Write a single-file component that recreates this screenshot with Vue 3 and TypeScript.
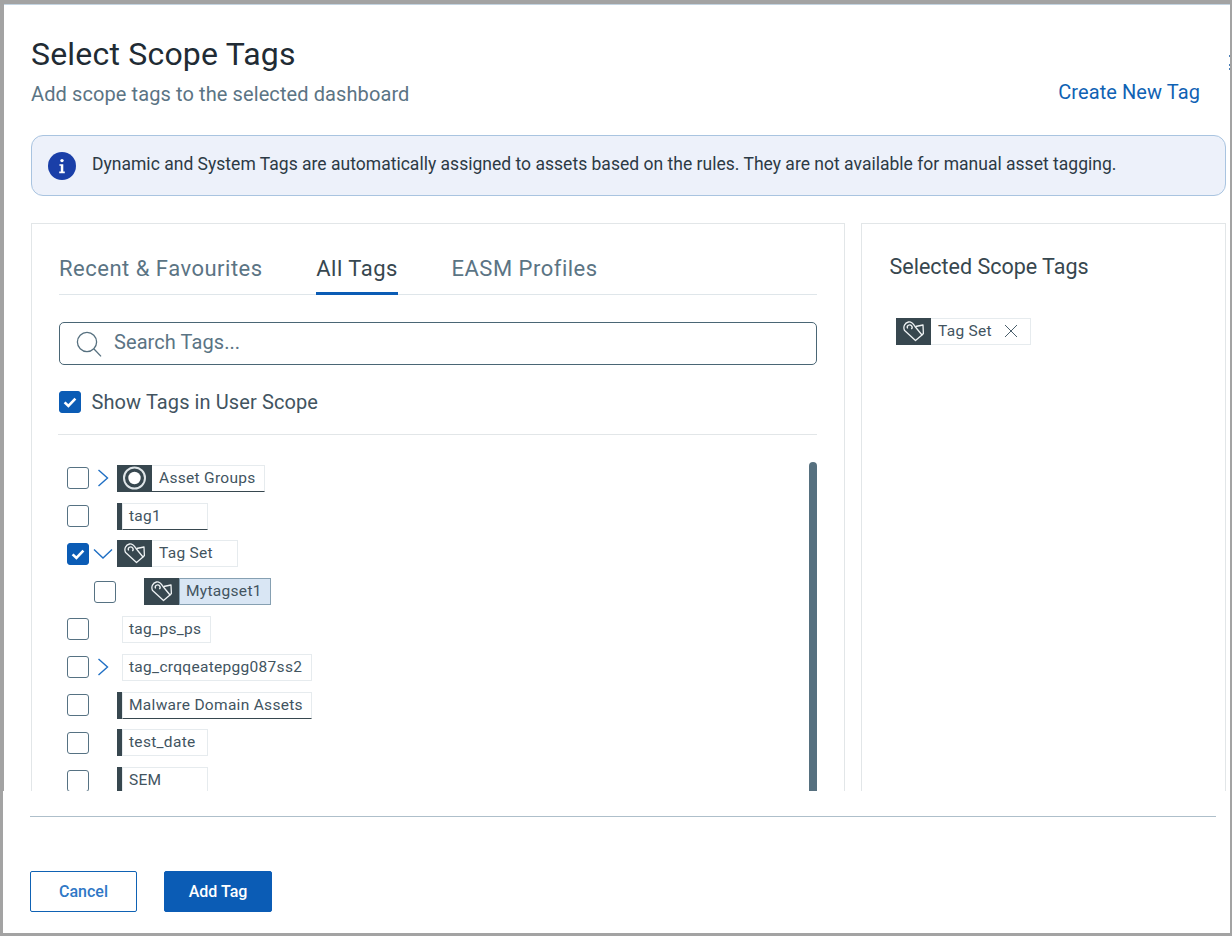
<script setup lang="ts">
type TagKind = 'plain' | 'bar' | 'icon'

interface TreeRow {
  label: string
  kind: TagKind
  glyph?: 'target' | 'tags'
  chevron?: 'right' | 'down'
  checked?: boolean
  child?: boolean
  strong?: boolean
  active?: boolean
}

const rows: TreeRow[] = [
  { label: 'Asset Groups', kind: 'icon', glyph: 'target', chevron: 'right', strong: true },
  { label: 'tag1', kind: 'bar', strong: true },
  { label: 'Tag Set', kind: 'icon', glyph: 'tags', chevron: 'down', checked: true },
  { label: 'Mytagset1', kind: 'icon', glyph: 'tags', child: true, active: true },
  { label: 'tag_ps_ps', kind: 'plain' },
  { label: 'tag_crqqeatepgg087ss2', kind: 'plain', chevron: 'right' },
  { label: 'Malware Domain Assets', kind: 'bar', strong: true },
  { label: 'test_date', kind: 'bar' },
  { label: 'SEM', kind: 'bar' },
]

const tabs = ['Recent & Favourites', 'All Tags', 'EASM Profiles']
</script>

<template>
  <div class="page">
    <div class="dialog">
      <header class="head">
        <div>
          <h1 class="title">Select Scope Tags</h1>
          <p class="subtitle">Add scope tags to the selected dashboard</p>
        </div>
        <a class="create">Create New Tag</a>
      </header>

      <div class="notice">
        <svg class="notice__icon" viewBox="0 0 28 28" width="28" height="28">
          <circle cx="14" cy="14" r="14" fill="#1a3fa8" />
          <circle cx="14" cy="8.6" r="1.7" fill="#fff" />
          <path d="M11.4 12.2h3.9v7.4h1.5v1.6h-5.6v-1.6h1.6v-5.8h-1.4z" fill="#fff" />
        </svg>
        <span class="notice__text">Dynamic and System Tags are automatically assigned to assets based on the rules. They are not available for manual asset tagging.</span>
      </div>

      <div class="columns">
        <section class="panel panel--left">
          <nav class="tabs">
            <span v-for="(tab, i) in tabs" :key="tab" class="tab" :class="{ 'tab--on': i === 1 }">{{ tab }}</span>
          </nav>

          <div class="search">
            <svg viewBox="0 0 26 26" width="26" height="26" fill="none" stroke="#56707f" stroke-width="1.3">
              <circle cx="11" cy="11" r="9.6" />
              <path d="M18 18l7 7.4" />
            </svg>
            <span>Search Tags...</span>
          </div>

          <label class="scope">
            <span class="check check--on">
              <svg viewBox="0 0 22 22" width="22" height="22" fill="none" stroke="#fff" stroke-width="2.6">
                <path d="M5.6 11.4l3.8 3.6 7-7.4" />
              </svg>
            </span>
            Show Tags in User Scope
          </label>

          <div class="tree">
            <div v-for="row in rows" :key="row.label" class="row" :class="{ 'row--child': row.child }">
              <span class="check" :class="{ 'check--on': row.checked }">
                <svg v-if="row.checked" viewBox="0 0 22 22" width="22" height="22" fill="none" stroke="#fff" stroke-width="2.6">
                  <path d="M5.6 11.4l3.8 3.6 7-7.4" />
                </svg>
              </span>
              <span class="chevron">
                <svg v-if="row.chevron === 'right'" viewBox="0 0 12 18" width="12" height="18" fill="none" stroke="#1f6fc4" stroke-width="1.4">
                  <path d="M1.5 1l9 8-9 8" />
                </svg>
                <svg v-else-if="row.chevron === 'down'" viewBox="0 0 20 12" width="20" height="12" fill="none" stroke="#1f6fc4" stroke-width="1.4">
                  <path d="M1 1.6l9 8.4 9-8.4" />
                </svg>
              </span>
              <span class="tag" :class="[`tag--${row.kind}`, { 'tag--strong': row.strong, 'tag--active': row.active }]">
                <span v-if="row.kind === 'icon'" class="tag__icon">
                  <svg v-if="row.glyph === 'target'" viewBox="0 0 27 27" width="27" height="27">
                    <circle cx="13.5" cy="13" r="10.5" fill="none" stroke="#dfe5e8" stroke-width="2" />
                    <circle cx="13.5" cy="13" r="6.2" fill="#fff" />
                  </svg>
                  <svg v-else viewBox="0 0 21 21" width="21" height="21" fill="none" stroke="#eef2f4" stroke-width="1.3" stroke-linejoin="round">
                    <path d="M1.6 9.6C-.2 6 1.6 1.6 5.5 1c3-.4 5 2 6.500 4.500l7 8.500-6.500 5.500z" />
                    <path d="M12.600 5.500l7.400-1.500.4 8.500-1.400 1.500" />
                    <path d="M4.600 7.500a2.400 2.400 0 1 1 3.700.6" />
                  </svg>
                </span>
                <span class="tag__label">{{ row.label }}</span>
              </span>
            </div>
            <div class="scrollbar"></div>
          </div>
        </section>

        <section class="panel panel--right">
          <h2 class="selected">Selected Scope Tags</h2>
          <div class="chip">
            <span class="tag__icon">
              <svg viewBox="0 0 21 21" width="21" height="21" fill="none" stroke="#eef2f4" stroke-width="1.3" stroke-linejoin="round">
                <path d="M1.6 9.6C-.2 6 1.6 1.6 5.5 1c3-.4 5 2 6.500 4.500l7 8.500-6.500 5.500z" />
                <path d="M12.600 5.500l7.400-1.500.4 8.500-1.400 1.500" />
                <path d="M4.600 7.500a2.400 2.400 0 1 1 3.700.6" />
              </svg>
            </span>
            <span class="chip__label">
              Tag Set
              <svg viewBox="0 0 14 14" width="14" height="14" fill="none" stroke="#4a5f6c" stroke-width="1">
                <path d="M1 1l12 12M13 1L1 13" />
              </svg>
            </span>
          </div>
        </section>
      </div>

      <footer class="foot">
        <div class="foot__rule"></div>
        <div class="foot__actions">
          <button class="btn btn--ghost">Cancel</button>
          <button class="btn btn--solid">Add Tag</button>
        </div>
      </footer>
    </div>
    <i class="speck speck--a"></i>
    <i class="speck speck--b"></i>
    <i class="speck speck--c"></i>
  </div>
</template>

<style>
body {
  background: #a3a3a3;
}
</style>

<style scoped>
.page {
  position: relative;
  width: 1232px;
  height: 936px;
  box-sizing: border-box;
  padding: 4px 2px 3px 4px;
  overflow: hidden;
  font-family: Roboto, "Liberation Sans", sans-serif;
  color: #37474f;
}
.speck {
  position: absolute;
  left: 1229px;
  width: 1px;
  height: 2px;
  background: #4a7fb8;
}
.speck--a { top: 55px; }
.speck--b { top: 64px; }
.speck--c { top: 68px; }
.dialog {
  height: 100%;
  display: flex;
  flex-direction: column;
  background: #fff;
  border-top: 1px solid #c3d3e0;
  box-sizing: border-box;
}
.head {
  display: flex;
  justify-content: space-between;
  padding: 28px 30px 0 27px;
  height: 102px;
  box-sizing: border-box;
  flex: none;
}
.title {
  margin: 0;
  font-size: 32px;
  line-height: 42px;
  font-weight: 400;
  letter-spacing: 0.2px;
  color: #212b34;
}
.subtitle {
  margin: 6px 0 0;
  font-size: 20px;
  line-height: 26px;
  letter-spacing: 0.1px;
  color: #5b7484;
}
.create {
  margin-top: 46px;
  font-size: 20px;
  line-height: 26px;
  letter-spacing: 0.08px;
  color: #0f62b4;
}
.notice {
  flex: none;
  display: flex;
  align-items: center;
  gap: 16px;
  height: 61px;
  box-sizing: border-box;
  margin: 28px 4px 0 27px;
  padding: 0 0 0 16px;
  background: #edf1fa;
  border: 1px solid #a9c4e0;
  border-radius: 12px;
  font-size: 17.5px;
  letter-spacing: 0.015px;
  color: #2c3a45;
}
.notice__text {
  padding-bottom: 4px;
}
.columns {
  flex: 1;
  min-height: 0;
  display: flex;
  gap: 16px;
  margin: 27px 4px 0 27px;
  overflow: hidden;
}
.panel {
  box-sizing: border-box;
  border: 1px solid #e2e6e8;
  border-bottom: none;
}
.panel--left {
  width: 814px;
  padding: 0 27px;
}
.panel--right {
  width: 365px;
  padding: 0 27.5px;
}
.tabs {
  display: flex;
  gap: 53.6px;
  height: 70px;
  align-items: flex-end;
  border-bottom: 1px solid #dfe6ea;
}
.tab {
  font-size: 22px;
  line-height: 42px;
  color: #5b7484;
  letter-spacing: 0.5px;
  margin-bottom: -1px;
  height: 44px;
  border-bottom: 3px solid transparent;
}
.tab--on {
  color: #37474f;
  border-bottom-color: #0b5cb5;
}
.search {
  display: flex;
  align-items: center;
  gap: 12px;
  height: 43px;
  margin-top: 27px;
  padding-left: 16px;
  box-sizing: border-box;
  border: 1px solid #4a6675;
  border-radius: 5px;
  font-size: 20px;
  letter-spacing: 0.08px;
  color: #5b7484;
}
.search span {
  padding-bottom: 4px;
}
.scope {
  display: flex;
  align-items: center;
  gap: 10.5px;
  height: 22px;
  margin-top: 26px;
  font-size: 20px;
  letter-spacing: 0.1px;
  color: #42545f;
  padding-bottom: 21px;
  border-bottom: 1px solid #e2e6e8;
  box-sizing: content-box;
  margin-left: -1px;
  padding-left: 1px;
}
.check {
  flex: none;
  width: 22px;
  height: 22px;
  box-sizing: border-box;
  border: 1px solid #567283;
  border-radius: 3px;
  background: #fff;
  display: flex;
  align-items: center;
  justify-content: center;
}
.check--on {
  background: #0b5cb5;
  border-color: #0b5cb5;
}
.check svg {
  flex: none;
}
.tree {
  position: relative;
  padding-top: 24.4px;
}
.row {
  display: flex;
  align-items: center;
  height: 37.8px;
  padding-left: 8px;
}
.row--child {
  padding-left: 35px;
}
.chevron {
  flex: none;
  width: 28px;
  display: flex;
  align-items: center;
  justify-content: center;
}
.tag {
  display: flex;
  height: 27px;
  font-size: 15.5px;
  letter-spacing: 0.3px;
  color: #42545f;
}
.tag--plain {
  margin-left: 5px;
}
.tag--bar {
  border-left: 5px solid #37474f;
}
.tag__icon {
  flex: none;
  width: 35px;
  height: 27px;
  background: #37474f;
  display: flex;
  align-items: center;
  justify-content: center;
}
.tag__label {
  box-sizing: border-box;
  min-width: 86px;
  padding: 0 8.5px 0 6px;
  line-height: 25px;
  border: 1px solid #e6ebee;
  border-left-width: 1px;
  white-space: nowrap;
}
.tag--icon .tag__label {
  border-left: none;
  padding-left: 7px;
}
.tag--strong .tag__label {
  border-bottom: 1px solid #37474f;
}
.tag--active .tag__label {
  background: #d9e6f4;
  border-color: #86a0b2;
  border-left: 1px solid #86a0b2;
  padding-left: 6px;
}
.scrollbar {
  position: absolute;
  top: 27px;
  right: 0;
  width: 8px;
  height: 340px;
  border-radius: 4px;
  background: #56707f;
}
.selected {
  margin: 29px 0 0;
  font-size: 21.5px;
  line-height: 28px;
  font-weight: 400;
  color: #37474f;
}
.chip {
  display: inline-flex;
  height: 27px;
  margin: 37px 0 0 6.5px;
  font-size: 15.5px;
  letter-spacing: 0.3px;
  color: #42545f;
}
.chip__label {
  display: flex;
  align-items: center;
  gap: 12px;
  box-sizing: border-box;
  padding: 0 12px 2px 7px;
  border: 1px solid #e6ebee;
  border-left: none;
}
.foot {
  flex: none;
  height: 142px;
  margin-left: -1px;
  background: #fff;
  padding: 25px 14px 0 27px;
  box-sizing: border-box;
}
.foot__rule {
  height: 1px;
  background: #aebfca;
}
.foot__actions {
  display: flex;
  gap: 27px;
  margin-top: 54px;
}
.btn {
  height: 41px;
  border-radius: 2px;
  font-family: inherit;
  font-size: 16px;
  font-weight: 500;
  padding: 0;
  box-sizing: border-box;
}
.btn--ghost {
  width: 107px;
  background: #fff;
  border: 1px solid #0f62b4;
  color: #2f78c6;
}
.btn--solid {
  width: 108px;
  background: #0b5cb5;
  border: 1px solid #0b5cb5;
  color: #fff;
}
</style>
